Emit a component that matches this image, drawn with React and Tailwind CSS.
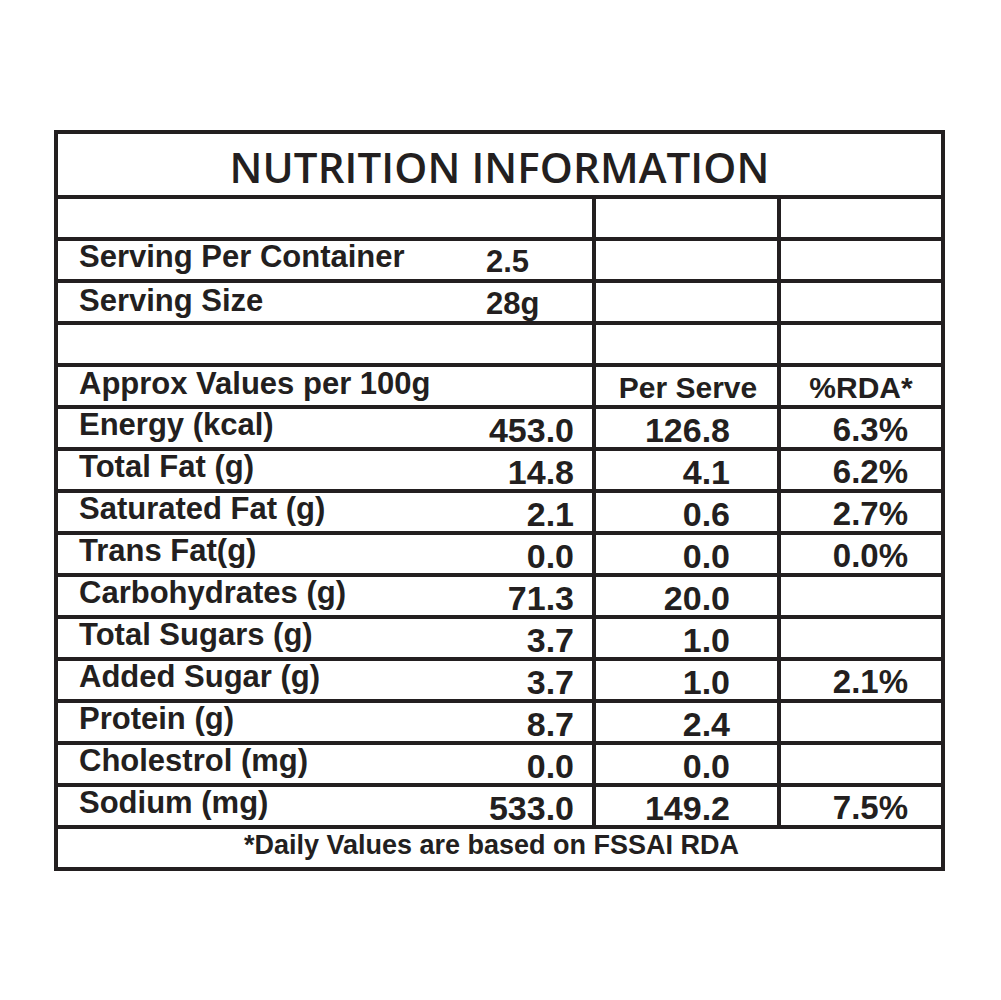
import React from "react";

const rows = [
  ["Energy (kcal)", "453.0", "126.8", "6.3%"],
  ["Total Fat (g)", "14.8", "4.1", "6.2%"],
  ["Saturated Fat (g)", "2.1", "0.6", "2.7%"],
  ["Trans Fat(g)", "0.0", "0.0", "0.0%"],
  ["Carbohydrates (g)", "71.3", "20.0", ""],
  ["Total Sugars (g)", "3.7", "1.0", ""],
  ["Added Sugar (g)", "3.7", "1.0", "2.1%"],
  ["Protein (g)", "8.7", "2.4", ""],
  ["Cholestrol (mg)", "0.0", "0.0", ""],
  ["Sodium (mg)", "533.0", "149.2", "7.5%"],
];

const font = { fontFamily: '"Liberation Sans", Arial, sans-serif' };

function Row({ children, c2, c3, head }) {
  return (
    <div className="flex h-[42px] border-b-4 border-[#231f20]">
      <div className="w-[534px] flex">{children}</div>
      <div
        className={
          "w-[185px] border-l-4 border-[#231f20] flex leading-none font-bold " +
          (head ? "justify-center pt-[6px] text-[30px] pl-[3px]" : "justify-end pr-[47px] pt-[4px] text-[34px]")
        }
      >
        {c2}
      </div>
      <div
        className={
          "flex-1 border-l-4 border-[#231f20] flex leading-none font-bold " +
          (head ? "justify-center pt-[6px] text-[30px]" : "justify-end pr-[33px] pt-[4px] text-[33px]")
        }
      >
        {c3}
      </div>
    </div>
  );
}

export default function App() {
  return (
    <div className="bg-white w-[1001px] h-[1000px] pt-[130px] pl-[54px] text-[#231f20]" style={font}>
      <div className="w-[891px] border-4 border-[#231f20] flex flex-col">
        <div className="h-[65px] border-b-4 border-[#231f20] flex justify-center pt-[12px]">
          <span
            className="text-[42px] leading-none font-semibold tracking-[0.1px]"
            style={{ fontFamily: '"Open Sans", sans-serif' }}
          >
            NUTRITION INFORMATION
          </span>
        </div>

        <Row c2="" c3="" />
        <Row c2="" c3="">
          <span className="pl-[21px] text-[31px] leading-none font-bold w-[428px]">Serving Per Container</span>
          <span className="text-[31px] leading-none font-bold pt-[5px]">2.5</span>
        </Row>
        <Row c2="" c3="">
          <span className="pl-[21px] text-[31px] leading-none font-bold w-[428px] pt-[2px]">Serving Size</span>
          <span className="text-[31px] leading-none font-bold pt-[5px]">28g</span>
        </Row>
        <Row c2="" c3="" />
        <Row c2="Per Serve" c3="%RDA*" head>
          <span className="pl-[21px] text-[31px] leading-none font-bold pt-[1px]">Approx Values per 100g</span>
        </Row>

        {rows.map(([label, v1, v2, v3]) => (
          <Row key={label} c2={v2} c3={v3}>
            <div className="flex w-full justify-between pr-[18px]">
              <span className="pl-[21px] text-[31px] leading-none font-bold">{label}</span>
              <span className="text-[34px] leading-none font-bold pt-[4px]">{v1}</span>
            </div>
          </Row>
        ))}

        <div className="h-[38px] flex justify-center pr-[16px] pt-[3px]">
          <span className="text-[27px] leading-none font-bold">*Daily Values are based on FSSAI RDA</span>
        </div>
      </div>
    </div>
  );
}
